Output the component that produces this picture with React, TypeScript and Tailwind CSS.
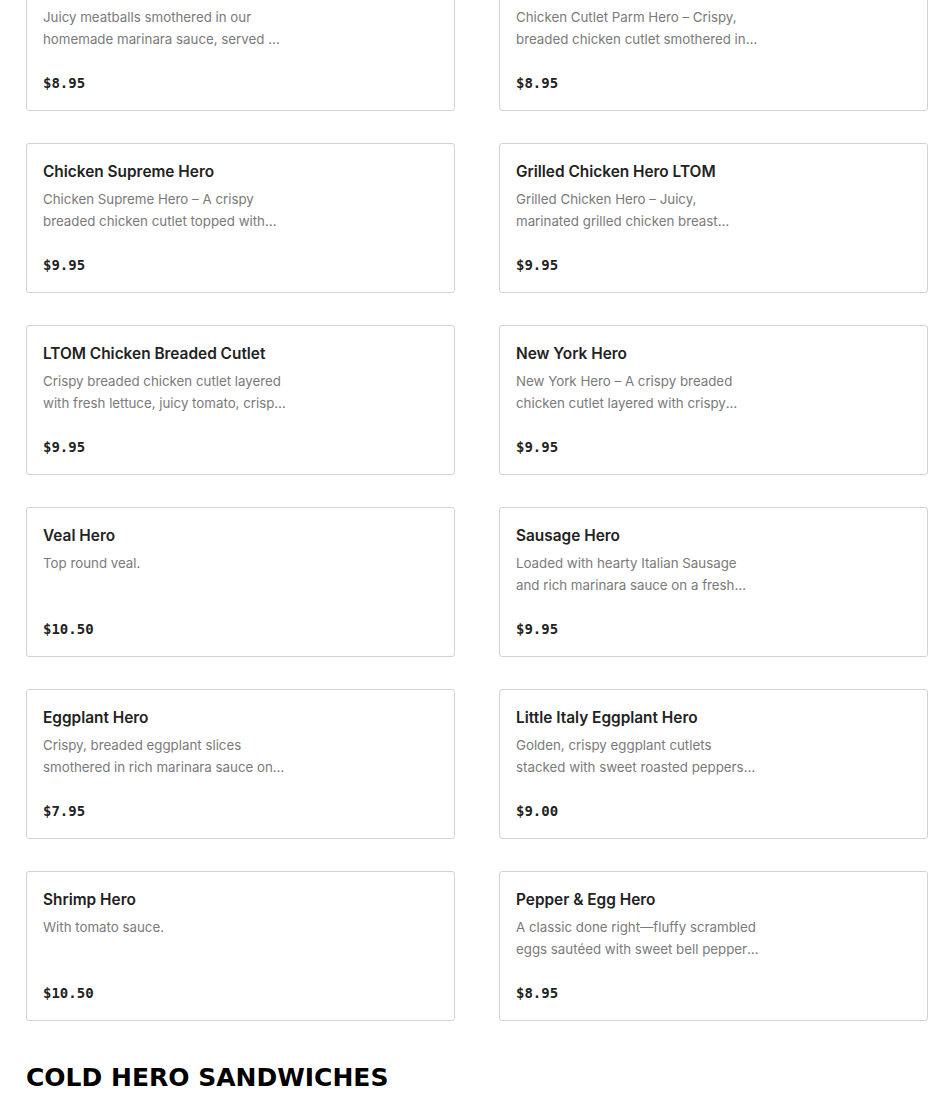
import React from 'react';

interface MenuItem {
  name: string;
  description: string;
  price: string;
}

const items: MenuItem[] = [
  { name: 'Meatball Parm Hero', description: 'Juicy meatballs smothered in our homemade marinara sauce, served on a toasted hero with melted mozzarella.', price: '$8.95' },
  { name: 'Chicken Cutlet Parm Hero', description: 'Chicken Cutlet Parm Hero – Crispy, breaded chicken cutlet smothered in marinara sauce and melted mozzarella.', price: '$8.95' },
  { name: 'Chicken Supreme Hero', description: 'Chicken Supreme Hero – A crispy breaded chicken cutlet topped with melted mozzarella and vodka sauce.', price: '$9.95' },
  { name: 'Grilled Chicken Hero LTOM', description: 'Grilled Chicken Hero – Juicy, marinated grilled chicken breast topped with lettuce, tomato, onion and mayo.', price: '$9.95' },
  { name: 'LTOM Chicken Breaded Cutlet', description: 'Crispy breaded chicken cutlet layered with fresh lettuce, juicy tomato, crispy onions and mayo.', price: '$9.95' },
  { name: 'New York Hero', description: 'New York Hero – A crispy breaded chicken cutlet layered with crispy bacon, melted cheese and ranch.', price: '$9.95' },
  { name: 'Veal Hero', description: 'Top round veal.', price: '$10.50' },
  { name: 'Sausage Hero', description: 'Loaded with hearty Italian Sausage and rich marinara sauce on a fresh hero roll with melted mozzarella.', price: '$9.95' },
  { name: 'Eggplant Hero', description: 'Crispy, breaded eggplant slices smothered in rich marinara sauce on a toasted hero roll.', price: '$7.95' },
  { name: 'Little Italy Eggplant Hero', description: 'Golden, crispy eggplant cutlets stacked with sweet roasted peppers and fresh mozzarella.', price: '$9.00' },
  { name: 'Shrimp Hero', description: 'With tomato sauce.', price: '$10.50' },
  { name: 'Pepper & Egg Hero', description: 'A classic done right—fluffy scrambled eggs sautéed with sweet bell peppers and onions.', price: '$8.95' },
];

const MenuCard: React.FC<{ item: MenuItem }> = ({ item }) => (
  <div className="h-[150px] flex flex-col border border-[#d3d3d3] rounded-[3px] bg-white px-4 pt-4 pb-[17px]">
    <div className="text-[15.4px] leading-6 font-semibold text-[#222222] truncate">{item.name}</div>
    <p className="mt-1 max-w-[244px] text-[13.3px] leading-[22px] text-[#7a7a7a] line-clamp-2">{item.description}</p>
    <div className="mt-auto text-[14px] leading-5 font-bold text-[#222222] font-['DejaVu_Sans_Mono',monospace]">
      {item.price}
    </div>
  </div>
);

export default function App() {
  return (
    <div className="h-[1108px] overflow-hidden bg-white font-['Inter',sans-serif]">
      <div className="ml-[26px] w-[902px] -mt-[39px]">
        <div className="grid grid-cols-2 gap-x-[44px] gap-y-8">
          {items.map((item) => (
            <MenuCard key={item.name} item={item} />
          ))}
        </div>
        <h2 className="mt-[41px] text-[25px] leading-8 font-bold text-black font-['DejaVu_Sans',sans-serif]">
          COLD HERO SANDWICHES
        </h2>
      </div>
    </div>
  );
}
